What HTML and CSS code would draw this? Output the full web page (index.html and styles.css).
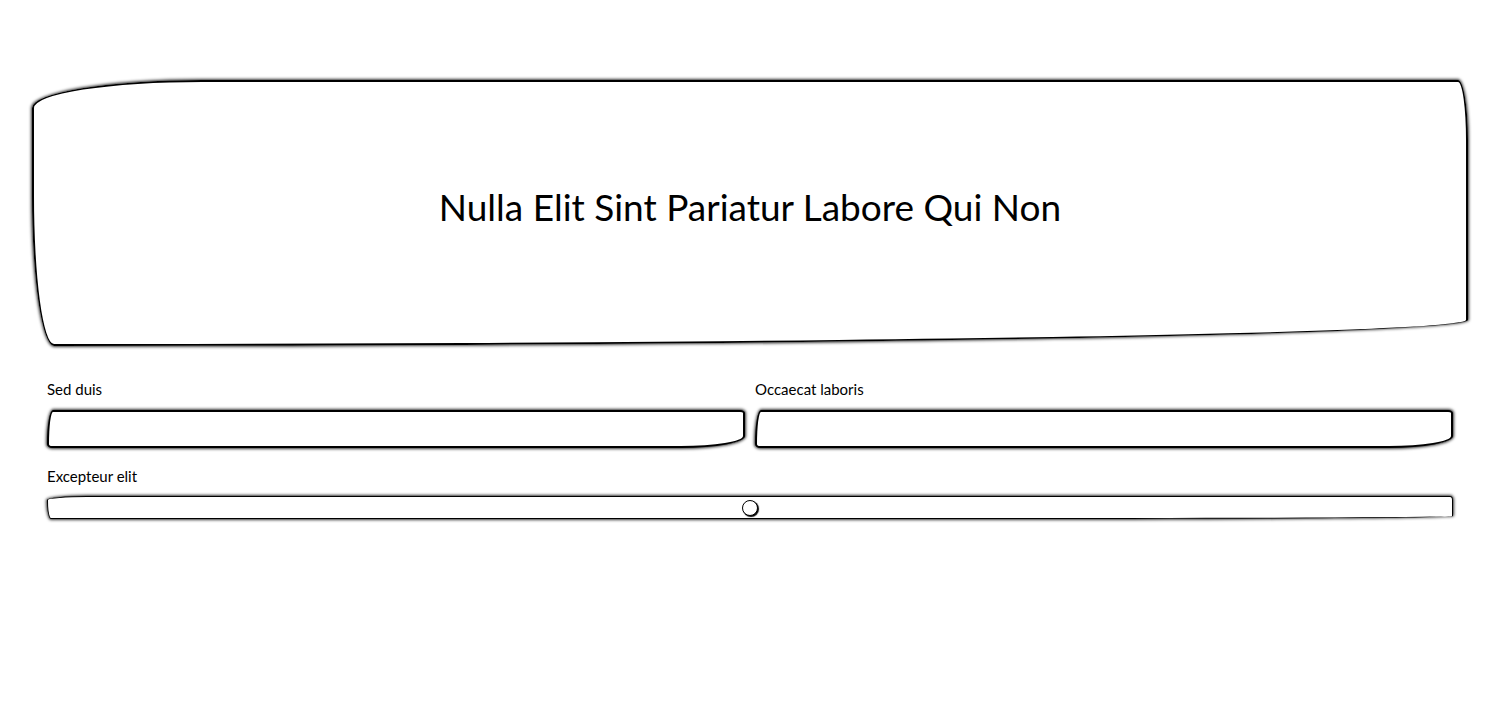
FILE: index.html
```html
<!DOCTYPE html>
<html lang="la">
<head>
<meta charset="utf-8">
<meta name="viewport" content="width=device-width, initial-scale=1">
<title>Nulla Elit Sint Pariatur Labore Qui Non</title>
<link rel="stylesheet" href="styles.css">
</head>
<body>
<main class="page">
  <header class="hero">
    <h1 class="hero-title">Nulla Elit Sint Pariatur Labore Qui Non</h1>
  </header>
  <form class="form">
    <div class="field">
      <label class="label" for="first">Sed duis</label>
      <input class="text-input" id="first" type="text">
    </div>
    <div class="field">
      <label class="label" for="second">Occaecat laboris</label>
      <input class="text-input" id="second" type="text">
    </div>
    <div class="field field-wide">
      <label class="label" for="amount">Excepteur elit</label>
      <input class="range" id="amount" type="range" min="0" max="100" value="50">
    </div>
  </form>
</main>
</body>
</html>
```
FILE: styles.css
```css
* {
  box-sizing: border-box;
}

body {
  margin: 0;
  background: #fff;
  color: #000;
  font-family: Lato, "Liberation Sans", sans-serif;
  font-size: 15px;
  line-height: 20px;
}

.page {
  padding: 80px 32px 32px;
}

.hero {
  padding: 96px 32px 108px;
  border: 2px solid #000;
  border-radius: 170px 10px 1414px 22px / 28px 60px 26px 150px;
  box-shadow: 0 0 3px 1px rgba(0, 0, 0, 0.8);
  text-align: center;
}

.hero-title {
  margin: 0;
  font-size: 37px;
  font-weight: 400;
  line-height: 58px;
}

.form {
  display: grid;
  grid-template-columns: 1fr 1fr;
  gap: 18px 10px;
  padding: 33px 15px 0;
}

.field {
  display: flex;
  flex-direction: column;
  gap: 11px;
}

.field-wide {
  grid-column: 1 / -1;
  gap: 10px;
}

.label {
  align-self: flex-start;
}

.text-input {
  width: 100%;
  height: 38px;
  padding: 0 10px;
  border: 2px solid #000;
  border-radius: 6px 5px 64px 5px / 34px 3px 12px 4px;
  background: #fff;
  box-shadow: 0 0 3px 1px rgba(0, 0, 0, 0.8);
  font: inherit;
}

.range {
  appearance: none;
  width: 100%;
  height: 23px;
  margin: 0;
  border: 1px solid #000;
  border-radius: 40px 3px 400px 4px / 4px 4px 3px 18px;
  background: #fff;
  box-shadow: 0 0 3px 1px rgba(0, 0, 0, 0.8);
}

.range::-webkit-slider-thumb {
  appearance: none;
  width: 16px;
  height: 16px;
  border: 1px solid #000;
  border-radius: 50%;
  background: #fff;
  box-shadow: 1px 1px 1px #000;
}
```
